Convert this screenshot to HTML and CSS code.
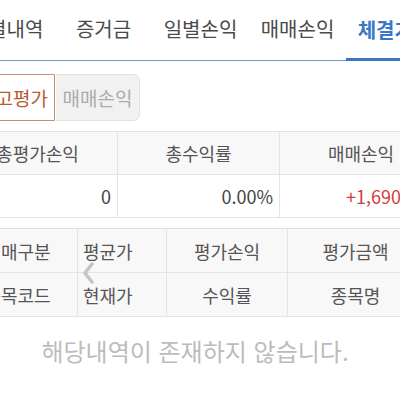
FILE: index.html
```html
<!DOCTYPE html>
<html lang="ko">
<head>
<meta charset="utf-8">
<link rel="stylesheet" href="styles.css">
</head>
<body>
<div class="screen">
  <div class="content">
    <nav class="tabs">
      <div class="tab">체결내역</div>
      <div class="tab">증거금</div>
      <div class="tab">일별손익</div>
      <div class="tab">매매손익</div>
      <div class="tab active">체결가능</div>
    </nav>
    <div class="toggle-bar">
      <div class="seg seg-on">잔고평가</div>
      <div class="seg seg-off">매매손익</div>
    </div>
    <div class="summary">
      <div class="cell head">총평가손익</div>
      <div class="cell head">총수익률</div>
      <div class="cell head">매매손익</div>
      <div class="cell num">0</div>
      <div class="cell num">0.00%</div>
      <div class="cell num up">+1,690,000</div>
    </div>
    <div class="detail">
      <div class="dcell">매매구분</div>
      <div class="dcell left">평균가</div>
      <div class="dcell">평가손익</div>
      <div class="dcell">평가금액</div>
      <div class="dcell"></div>
      <div class="dcell">종목코드</div>
      <div class="dcell left">현재가</div>
      <div class="dcell">수익률</div>
      <div class="dcell">종목명</div>
      <div class="dcell"></div>
    </div>
  </div>
  <div class="empty">해당내역이 존재하지 않습니다.</div>
  <svg class="chevron" width="14" height="24" viewBox="0 0 14 24"><path d="M11 3 L4 12 L11 21" fill="none" stroke="#c4c4c4" stroke-width="3.5" stroke-linecap="round" stroke-linejoin="round"/></svg>
</div>
</body>
</html>
```

FILE: styles.css
```css
html, body {
  margin: 0;
  padding: 0;
  background: #fff;
}
.screen {
  position: relative;
  width: 400px;
  height: 400px;
  overflow: hidden;
  background: #fff;
  font-family: "Noto Sans CJK KR", "Noto Sans", sans-serif;
  color: #555;
}
.content {
  width: 485px;
  margin-left: -42px;
}
.tabs {
  display: grid;
  grid-template-columns: repeat(5, 97px);
  height: 60px;
  border-bottom: 1px solid #6e98d2;
}
.tab {
  display: flex;
  align-items: center;
  justify-content: center;
  font-size: 20px;
  color: #4a4a4a;
  padding-bottom: 3px;
  white-space: nowrap;
}
.tab.active {
  color: #3a78c6;
  font-weight: 700;
  border-bottom: 3px solid #3a78c6;
  margin-bottom: -1px;
  padding-bottom: 0;
}
.toggle-bar {
  display: flex;
  padding: 13px 0 10px 13px;
}
.seg {
  box-sizing: border-box;
  width: 84px;
  height: 47px;
  display: flex;
  align-items: center;
  justify-content: center;
  font-size: 19px;
  white-space: nowrap;
}
.seg-on {
  border: 1px solid #c98d73;
  color: #b85a33;
  background: #fff;
  border-radius: 6px 0 0 6px;
}
.seg-off {
  margin-left: 1px;
  background: #f1f1f1;
  border: 1px solid #e2e2e2;
  border-left: none;
  color: #ababab;
  border-radius: 0 7px 7px 0;
}
.summary {
  display: grid;
  grid-template-columns: 160px 162px 163px;
  grid-auto-rows: 43px;
  border-top: 1px solid #e0e0e0;
}
.cell {
  box-sizing: border-box;
  display: flex;
  align-items: center;
  font-size: 18px;
  border-right: 1px solid #e4e4e4;
  border-bottom: 1px solid #e4e4e4;
  white-space: nowrap;
}
.cell.head {
  justify-content: center;
  background: #f8f8f8;
}
.cell.num {
  justify-content: flex-end;
  padding-right: 6px;
  color: #444;
}
.cell.up {
  color: #d23c3c;
}
.detail {
  margin-top: 10px;
  display: grid;
  grid-template-columns: 120px 89px 121px 136px 19px;
  grid-auto-rows: 44px;
  border-top: 1px solid #e0e0e0;
}
.dcell {
  box-sizing: border-box;
  display: flex;
  align-items: center;
  justify-content: center;
  font-size: 18px;
  background: #f8f8f8;
  border-right: 1px solid #e4e4e4;
  border-bottom: 1px solid #e4e4e4;
  white-space: nowrap;
}
.dcell.left {
  justify-content: flex-start;
  padding-left: 5px;
}
.empty {
  text-align: center;
  font-size: 24px;
  color: #bcbcbc;
  margin-top: 16px;
  padding-right: 10px;
}
.chevron {
  position: absolute;
  left: 81px;
  top: 261px;
}
```
